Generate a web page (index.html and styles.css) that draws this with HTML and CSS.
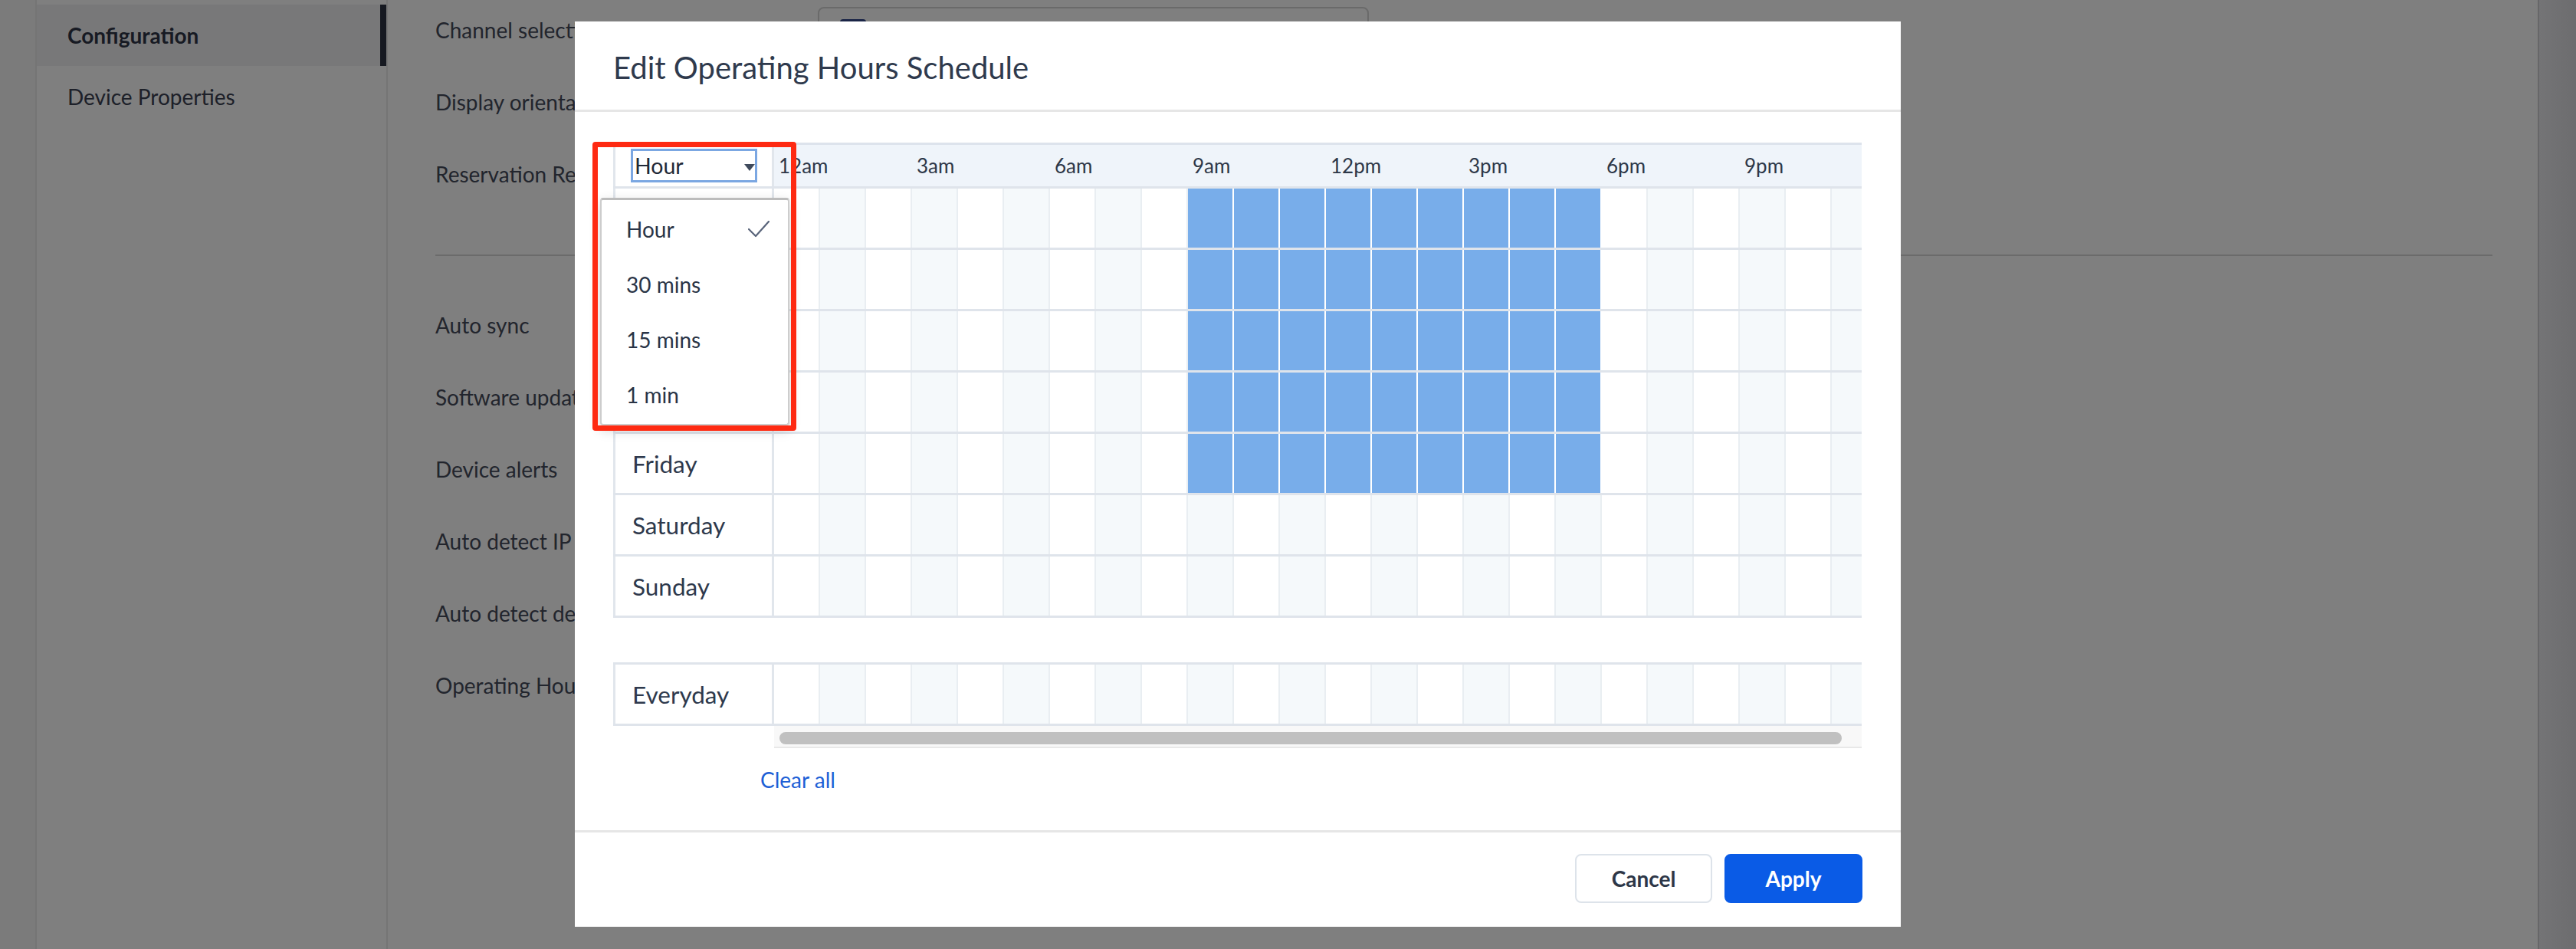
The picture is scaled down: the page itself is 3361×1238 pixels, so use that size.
FILE: index.html
```html
<!DOCTYPE html>
<html lang="en">
<head>
<meta charset="utf-8">
<title>Edit Operating Hours Schedule</title>
<link rel="stylesheet" href="styles.css">
</head>
<body>
<div class="page">
  <div class="gutter"></div>
  <nav class="sidebar">
    <div class="nav-item active">Configuration</div>
    <div class="nav-item">Device Properties</div>
  </nav>
  <main class="main">
    <div class="settings first">
      <div class="row"><span class="label">Channel selection</span><div class="field"><span class="checkbox"></span></div></div>
      <div class="row"><span class="label">Display orientation</span></div>
      <div class="row"><span class="label">Reservation Reminder</span></div>
    </div>
    <hr class="sep">
    <div class="settings">
      <div class="row"><span class="label">Auto sync</span></div>
      <div class="row"><span class="label">Software updates</span></div>
      <div class="row"><span class="label">Device alerts</span></div>
      <div class="row"><span class="label">Auto detect IP</span></div>
      <div class="row"><span class="label">Auto detect device</span></div>
      <div class="row"><span class="label">Operating Hours</span></div>
    </div>
  </main>
  <div class="rail"></div>
</div>

<div class="overlay"></div>

<div class="modal">
  <header class="modal-head"><h2>Edit Operating Hours Schedule</h2></header>
  <section class="modal-body">
    <div class="sched">
      <div class="srow head">
        <div class="dcell"><div class="select"><span>Hour</span><span class="caret"></span></div></div>
        <div class="hours labels"><span>12am</span><span>3am</span><span>6am</span><span>9am</span><span>12pm</span><span>3pm</span><span>6pm</span><span>9pm</span></div>
      </div>
      <div class="srow">
        <div class="dcell">Monday</div>
        <div class="hours"><span class="c"></span><span class="c"></span><span class="c"></span><span class="c"></span><span class="c"></span><span class="c"></span><span class="c"></span><span class="c"></span><span class="c"></span><span class="c on"></span><span class="c on"></span><span class="c on"></span><span class="c on"></span><span class="c on"></span><span class="c on"></span><span class="c on"></span><span class="c on"></span><span class="c on"></span><span class="c"></span><span class="c"></span><span class="c"></span><span class="c"></span><span class="c"></span><span class="c"></span></div>
      </div>
      <div class="srow">
        <div class="dcell">Tuesday</div>
        <div class="hours"><span class="c"></span><span class="c"></span><span class="c"></span><span class="c"></span><span class="c"></span><span class="c"></span><span class="c"></span><span class="c"></span><span class="c"></span><span class="c on"></span><span class="c on"></span><span class="c on"></span><span class="c on"></span><span class="c on"></span><span class="c on"></span><span class="c on"></span><span class="c on"></span><span class="c on"></span><span class="c"></span><span class="c"></span><span class="c"></span><span class="c"></span><span class="c"></span><span class="c"></span></div>
      </div>
      <div class="srow">
        <div class="dcell">Wednesday</div>
        <div class="hours"><span class="c"></span><span class="c"></span><span class="c"></span><span class="c"></span><span class="c"></span><span class="c"></span><span class="c"></span><span class="c"></span><span class="c"></span><span class="c on"></span><span class="c on"></span><span class="c on"></span><span class="c on"></span><span class="c on"></span><span class="c on"></span><span class="c on"></span><span class="c on"></span><span class="c on"></span><span class="c"></span><span class="c"></span><span class="c"></span><span class="c"></span><span class="c"></span><span class="c"></span></div>
      </div>
      <div class="srow">
        <div class="dcell">Thursday</div>
        <div class="hours"><span class="c"></span><span class="c"></span><span class="c"></span><span class="c"></span><span class="c"></span><span class="c"></span><span class="c"></span><span class="c"></span><span class="c"></span><span class="c on"></span><span class="c on"></span><span class="c on"></span><span class="c on"></span><span class="c on"></span><span class="c on"></span><span class="c on"></span><span class="c on"></span><span class="c on"></span><span class="c"></span><span class="c"></span><span class="c"></span><span class="c"></span><span class="c"></span><span class="c"></span></div>
      </div>
      <div class="srow">
        <div class="dcell">Friday</div>
        <div class="hours"><span class="c"></span><span class="c"></span><span class="c"></span><span class="c"></span><span class="c"></span><span class="c"></span><span class="c"></span><span class="c"></span><span class="c"></span><span class="c on"></span><span class="c on"></span><span class="c on"></span><span class="c on"></span><span class="c on"></span><span class="c on"></span><span class="c on"></span><span class="c on"></span><span class="c on"></span><span class="c"></span><span class="c"></span><span class="c"></span><span class="c"></span><span class="c"></span><span class="c"></span></div>
      </div>
      <div class="srow">
        <div class="dcell">Saturday</div>
        <div class="hours"><span class="c"></span><span class="c"></span><span class="c"></span><span class="c"></span><span class="c"></span><span class="c"></span><span class="c"></span><span class="c"></span><span class="c"></span><span class="c"></span><span class="c"></span><span class="c"></span><span class="c"></span><span class="c"></span><span class="c"></span><span class="c"></span><span class="c"></span><span class="c"></span><span class="c"></span><span class="c"></span><span class="c"></span><span class="c"></span><span class="c"></span><span class="c"></span></div>
      </div>
      <div class="srow">
        <div class="dcell">Sunday</div>
        <div class="hours"><span class="c"></span><span class="c"></span><span class="c"></span><span class="c"></span><span class="c"></span><span class="c"></span><span class="c"></span><span class="c"></span><span class="c"></span><span class="c"></span><span class="c"></span><span class="c"></span><span class="c"></span><span class="c"></span><span class="c"></span><span class="c"></span><span class="c"></span><span class="c"></span><span class="c"></span><span class="c"></span><span class="c"></span><span class="c"></span><span class="c"></span><span class="c"></span></div>
      </div>
    </div>

    <div class="sched everyday">
      <div class="srow">
        <div class="dcell">Everyday</div>
        <div class="hours"><span class="c"></span><span class="c"></span><span class="c"></span><span class="c"></span><span class="c"></span><span class="c"></span><span class="c"></span><span class="c"></span><span class="c"></span><span class="c"></span><span class="c"></span><span class="c"></span><span class="c"></span><span class="c"></span><span class="c"></span><span class="c"></span><span class="c"></span><span class="c"></span><span class="c"></span><span class="c"></span><span class="c"></span><span class="c"></span><span class="c"></span><span class="c"></span></div>
      </div>
    </div>
    <div class="scroll"><div class="thumb"></div></div>
    <div class="clear"><a class="clear-link">Clear all</a></div>
  </section>
  <footer class="modal-foot">
    <button class="btn">Cancel</button>
    <button class="btn primary">Apply</button>
  </footer>

  <div class="menu">
    <div class="menu-item"><span>Hour</span><svg class="check" width="28" height="22" viewBox="0 0 28 22"><polyline points="1,11 10,20 27,1" fill="none" stroke="#59647a" stroke-width="2.2" stroke-linecap="round" stroke-linejoin="round"/></svg></div>
    <div class="menu-item"><span>30 mins</span></div>
    <div class="menu-item"><span>15 mins</span></div>
    <div class="menu-item"><span>1 min</span></div>
  </div>
  <div class="annot"></div>
</div>
</body>
</html>
```

FILE: styles.css
```css
* { box-sizing: border-box; }

body {
  margin: 0;
  width: 3361px;
  height: 1238px;
  overflow: hidden;
  font-family: Lato, "Noto Sans", "Liberation Sans", sans-serif;
  background: #f7f7f7;
}

.page {
  display: flex;
  height: 1238px;
}

.gutter {
  width: 46px;
  flex: none;
  background: #f7f7f7;
}

.sidebar {
  width: 460px;
  flex: none;
  background: #ffffff;
  border-left: 2px solid #ebebeb;
  border-right: 2px solid #ebebeb;
  padding-top: 6px;
}

.nav-item {
  height: 80px;
  display: flex;
  align-items: center;
  padding-left: 40px;
  font-size: 28px;
  color: #3b4152;
}

.nav-item.active {
  background: #f1f1f3;
  font-weight: 700;
  color: #2f3546;
  box-shadow: inset -8px 0 0 #2c3243;
}

.main {
  flex: 1;
  background: #ffffff;
  padding: 0 59px 0 62px;
}

.settings.first {
  margin-top: -8px;
}

.row {
  height: 94px;
  display: flex;
  align-items: center;
}

.label {
  width: 499px;
  flex: none;
  font-size: 28px;
  color: #444a5a;
  white-space: nowrap;
}

.field {
  width: 719px;
  height: 60px;
  border: 2px solid #d4d4d4;
  border-radius: 8px;
  padding: 14px 0 0 27px;
}

.checkbox {
  display: block;
  width: 34px;
  height: 34px;
  border-radius: 4px;
  background: #34498c;
}

.sep {
  margin: 58px 0 43px;
  border: 0;
  border-top: 2px solid #d6d6d6;
}

.rail {
  width: 50px;
  flex: none;
  border-left: 2px solid #cfcfd3;
  background: linear-gradient(90deg, #e8e8ec, #dadade);
}

.overlay {
  position: fixed;
  inset: 0;
  background: rgba(0, 0, 0, 0.5);
}

/* Modal */
.modal {
  position: fixed;
  left: 750px;
  top: 28px;
  width: 1730px;
  height: 1181px;
  background: #ffffff;
  display: flex;
  flex-direction: column;
}

.modal-head {
  height: 118px;
  flex: none;
  border-bottom: 3px solid #e6e6e6;
  padding: 5px 50px 0;
  display: flex;
  align-items: center;
}

.modal-head h2 {
  margin: 0;
  font-size: 40px;
  font-weight: 400;
  color: #2f3a4d;
}

.modal-body {
  flex: 1;
  padding: 40px 51px 0 50px;
}

.sched {
  width: 1629px;
}

.srow {
  display: flex;
  height: 80px;
  border-bottom: 3px solid #dfe4eb;
}

.srow.head {
  height: 60px;
  border-top: 3px solid #dde3ec;
}

.everyday {
  margin-top: 58px;
  border-top: 3px solid #dfe4eb;
}

.dcell {
  width: 210px;
  flex: none;
  border-left: 3px solid #e1e6ec;
  border-right: 3px solid #e1e6ec;
  padding-left: 22px;
  display: flex;
  align-items: center;
  font-size: 31.5px;
  color: #2e394c;
  background: #ffffff;
}

.head .dcell {
  padding-left: 20px;
}

.select {
  width: 165px;
  height: 44px;
  border: 3px solid #7ba7e2;
  padding: 0 0 0 2px;
  display: flex;
  align-items: center;
  justify-content: space-between;
  font-size: 28.5px;
  color: #1f2937;
  background: #ffffff;
}

.caret {
  width: 0;
  height: 0;
  border-left: 7px solid transparent;
  border-right: 7px solid transparent;
  border-top: 9px solid #3f4a5c;
  margin-top: 4px;
}

.hours {
  width: 1419px;
  flex: none;
  display: flex;
  overflow: hidden;
}

.labels {
  background: #eff4fa;
  align-items: center;
}

.labels span {
  width: 180px;
  flex: none;
  padding-left: 6px;
  font-size: 26px;
  color: #2d3748;
}

.c {
  width: 60px;
  flex: none;
  border-right: 2px solid #e9eef2;
  background: #ffffff;
}

.c:nth-child(even) {
  background: #f5f9fb;
}

.c.on,
.c.on:nth-child(even) {
  background: #78adea;
  border-right-color: #ffffff;
}

.scroll {
  margin-left: 210px;
  width: 1419px;
  height: 29px;
  background: #f8f8f8;
  border-bottom: 2px solid #e8e8e8;
  padding: 8px 0 0 7px;
}

.thumb {
  width: 1386px;
  height: 16px;
  border-radius: 8px;
  background: #c0c0c0;
}

.clear {
  margin-top: 24px;
  padding-left: 192px;
  line-height: 34px;
}

.clear-link {
  font-size: 28px;
  color: #1d5fd6;
}

.modal-foot {
  height: 126px;
  flex: none;
  border-top: 3px solid #e6e6e6;
  padding: 28px 50px 0;
  display: flex;
  justify-content: flex-end;
  align-items: flex-start;
  gap: 16px;
}

.btn {
  width: 179px;
  height: 64px;
  border: 2px solid #dde3ea;
  border-radius: 8px;
  background: #ffffff;
  font-family: Lato, "Noto Sans", sans-serif;
  font-size: 28px;
  font-weight: 700;
  color: #2d3748;
}

.btn.primary {
  width: 180px;
  background: #0a5be6;
  border-color: #0a5be6;
  color: #ffffff;
}

/* Dropdown menu over the grid */
.menu {
  position: absolute;
  left: 33px;
  top: 230px;
  width: 247px;
  background: #ffffff;
  border: 2px solid #cdcdcd;
  border-top: 3px solid #bcbcbc;
  border-radius: 4px;
  box-shadow: 0 6px 16px rgba(0, 0, 0, 0.18);
  padding: 2px 0;
}

.menu-item {
  height: 72px;
  display: flex;
  align-items: center;
  justify-content: space-between;
  padding: 0 24px 0 32px;
  font-size: 28px;
  color: #2a3446;
}

.check {
  display: block;
}

/* Red annotation rectangle */
.annot {
  position: absolute;
  left: 23px;
  top: 157px;
  width: 266px;
  height: 377px;
  border: 7px solid #fe2a12;
  border-radius: 4px;
}
```
